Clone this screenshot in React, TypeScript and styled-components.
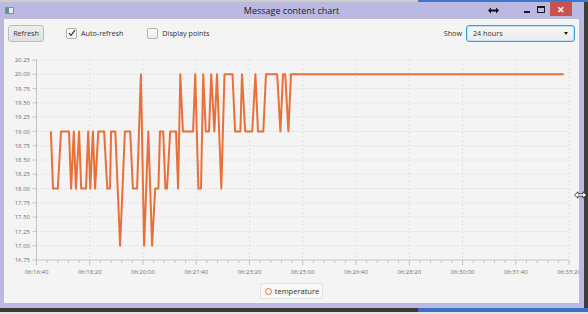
import React from "react";
import styled, { createGlobalStyle } from "styled-components";

const GlobalStyle = createGlobalStyle`
  html, body {
    margin: 0;
    padding: 0;
    background: #e6e6e6;
  }
  body {
    font-family: "Open Sans", "Noto Sans", sans-serif;
  }
`;

const ORANGE = "#e8703a";
const LAVENDER = "#b9b9e4";

// 06:16:40 on the axis, seconds from there
const START = 6 * 3600 + 16 * 60 + 40;
const SPAN = 1000;
const Y_MIN = 16.75;
const Y_MAX = 20.25;

const samples: [number, number][] = [
  [27, 19], [31, 18], [40, 18], [46, 19], [61, 19], [65, 18], [70, 19],
  [74, 18], [80, 19], [84, 18], [93, 18], [97, 19], [101, 18], [106, 19],
  [110, 18], [116, 19], [127, 19], [133, 18], [138, 18], [140, 19],
  [148, 19], [157, 17], [166, 19], [176, 19], [181, 18], [189, 18],
  [196, 20], [202, 17], [210, 19], [217, 17], [223, 18], [229, 18],
  [232, 19], [238, 19], [242, 18], [245, 18], [251, 19], [262, 19],
  [266, 18], [270, 20], [275, 19], [294, 19], [298, 20], [304, 18],
  [309, 18], [313, 20], [318, 19], [324, 19], [328, 20], [334, 19],
  [339, 20], [347, 18], [353, 20], [368, 20], [373, 19], [383, 19],
  [386, 20], [392, 19], [405, 19], [411, 20], [416, 19], [426, 19],
  [431, 20], [452, 20], [458, 19], [463, 20], [467, 20], [473, 19],
  [478, 20], [990, 20],
];

const Screen = styled.div`
  position: relative;
  width: 588px;
  height: 314px;
  overflow: hidden;
  display: flex;
  flex-direction: column;
  background: #e4e4e4;
`;

const BehindStrip = styled.div`
  height: 2px;
  background: linear-gradient(to right, #cdcdcd 0, #cdcdcd 418px, #3b78cf 418px);
`;

const Frame = styled.div`
  box-sizing: border-box;
  width: 588px;
  height: 306px;
  padding: 0 5px 5px 4px;
  background: ${LAVENDER};
  border-right: 4px solid #3c3c3c;
  display: flex;
  flex-direction: column;
`;

const BottomEdge = styled.div`
  height: 4px;
  background: linear-gradient(to right, #3a3a3a 0, #3a3a3a 418px, #3f6fc0 418px);
`;

const TitleBar = styled.div`
  position: relative;
  height: 17px;
  display: grid;
  grid-template-columns: 1fr auto 1fr;
  align-items: center;
`;

const AppIcon = styled.span`
  width: 7px;
  height: 5px;
  margin-left: 1px;
  background: linear-gradient(to right, #4f9c8e 0, #4f9c8e 3px, #e8e8e8 3px);
  border: 1px solid #8a8aa8;
`;

const Title = styled.div`
  font-size: 9px;
  color: #1e1e1e;
  line-height: 17px;
`;

const Controls = styled.div`
  justify-self: end;
  align-self: start;
  display: flex;
  align-items: flex-start;
  margin-right: 7px;
`;

const ControlGlyph = styled.div`
  width: 14px;
  height: 14px;
  display: flex;
  align-items: center;
  justify-content: center;
`;

const MinimizeBar = styled.span`
  width: 6px;
  height: 2px;
  margin-top: 5px;
  background: #1a1a1a;
`;

const MaximizeBox = styled.span`
  box-sizing: border-box;
  width: 8px;
  height: 7px;
  border: 1px solid #1a1a1a;
  border-top-width: 2px;
`;

const CloseButton = styled.div`
  width: 22px;
  height: 14px;
  margin-left: 2px;
  background: #c9524c;
  color: #fff;
  font-size: 9px;
  font-weight: 700;
  display: flex;
  align-items: center;
  justify-content: center;
`;

const Cursor = styled.svg<{ $x: number; $y: number }>`
  position: absolute;
  left: ${(p) => p.$x}px;
  top: ${(p) => p.$y}px;
`;

const Content = styled.div`
  flex: 1;
  background: #f4f4f4;
  display: flex;
  flex-direction: column;
`;

const Toolbar = styled.div`
  height: 28px;
  padding: 0 4px;
  display: flex;
  align-items: center;
  font-size: 7.2px;
  color: #333;
`;

const Button = styled.button`
  box-sizing: border-box;
  width: 36px;
  height: 17px;
  padding: 0;
  border: 1px solid #bcbcbc;
  border-radius: 3px;
  background: linear-gradient(#eeeeee, #e0e0e0);
  font-family: inherit;
  font-size: 7.2px;
  color: #333;
`;

const CheckRow = styled.label<{ $gap: number }>`
  display: flex;
  align-items: center;
  gap: 4px;
  margin-left: ${(p) => p.$gap}px;
`;

const Box = styled.span`
  box-sizing: border-box;
  width: 11px;
  height: 11px;
  border: 1px solid #b4b4b4;
  border-radius: 2px;
  background: linear-gradient(#fbfbfb, #ececec);
  display: flex;
  align-items: center;
  justify-content: center;
`;

const Spacer = styled.div`
  flex: 1;
`;

const ShowLabel = styled.span`
  margin-right: 4px;
`;

const Select = styled.div`
  box-sizing: border-box;
  width: 109px;
  height: 17px;
  padding: 0 6px 0 6px;
  border: 1px solid #3a9fd6;
  box-shadow: inset 0 0 0 1px #bfe2f3;
  border-radius: 3px;
  background: linear-gradient(#f6f6f6, #ececec);
  display: flex;
  align-items: center;
  justify-content: space-between;
`;

const Arrow = styled.span`
  width: 0;
  height: 0;
  border-left: 2.5px solid transparent;
  border-right: 2.5px solid transparent;
  border-top: 3px solid #222;
`;

const ChartSvg = styled.svg`
  display: block;
`;

const LegendRow = styled.div`
  display: flex;
  justify-content: center;
  margin-top: 2px;
`;

const LegendBox = styled.div`
  box-sizing: border-box;
  height: 16px;
  padding: 0 3px 0 4px;
  border: 1px solid #e2e2e2;
  border-radius: 2px;
  background: #f8f8f8;
  display: flex;
  align-items: center;
  gap: 3px;
  font-size: 7.5px;
  color: #333;
`;

const LegendRing = styled.span`
  box-sizing: border-box;
  width: 7px;
  height: 7px;
  border-radius: 50%;
  border: 1.6px solid ${ORANGE};
  background: #fff;
`;

const W = 575;
const H = 234;
const LEFT = 32.5;
const RIGHT = 565;
const TOP = 13;
const BOTTOM = 213;

const sx = (s: number) => LEFT + (s / SPAN) * (RIGHT - LEFT);
const sy = (v: number) => BOTTOM - ((v - Y_MIN) / (Y_MAX - Y_MIN)) * (BOTTOM - TOP);

const pad = (n: number) => String(n).padStart(2, "0");
const clock = (s: number) => {
  const t = START + s;
  return `${pad(Math.floor(t / 3600))}:${pad(Math.floor((t % 3600) / 60))}:${pad(t % 60)}`;
};

const Chart = () => {
  const yTicks = Array.from({ length: 15 }, (_, i) => Y_MIN + i * 0.25);
  const xMajor = Array.from({ length: 11 }, (_, i) => i * 100);
  const xMinor = Array.from({ length: 51 }, (_, i) => i * 20).filter((s) => s % 100 !== 0);
  const points = samples.map(([s, v]) => `${sx(s).toFixed(1)},${sy(v).toFixed(1)}`).join(" ");

  return (
    <ChartSvg width={W} height={H} viewBox={`0 0 ${W} ${H}`}>
      {yTicks.slice(1).map((v) => (
        <line key={`h${v}`} x1={LEFT} x2={RIGHT} y1={sy(v)} y2={sy(v)} stroke="#dcdcdc" strokeWidth={0.8} strokeDasharray="2 2" />
      ))}
      {xMajor.slice(1).map((s) => (
        <line key={`v${s}`} x1={sx(s)} x2={sx(s)} y1={TOP} y2={BOTTOM} stroke="#dcdcdc" strokeWidth={0.8} strokeDasharray="2 2" />
      ))}
      <line x1={LEFT} x2={LEFT} y1={TOP} y2={BOTTOM} stroke="#b8b8b8" strokeWidth={0.8} />
      <line x1={LEFT} x2={RIGHT} y1={BOTTOM} y2={BOTTOM} stroke="#b8b8b8" strokeWidth={0.8} />
      {yTicks.map((v) => (
        <g key={`y${v}`}>
          <line x1={LEFT - 4} x2={LEFT} y1={sy(v)} y2={sy(v)} stroke="#b8b8b8" strokeWidth={0.8} />
          <text x={26} y={sy(v) + 2.1} fontSize={6} fill="#707070" textAnchor="end" fontFamily="Open Sans, Noto Sans, sans-serif">
            {v.toFixed(2)}
          </text>
        </g>
      ))}
      {xMinor.map((s) => (
        <line key={`m${s}`} x1={sx(s)} x2={sx(s)} y1={BOTTOM} y2={BOTTOM + 3} stroke="#b8b8b8" strokeWidth={0.8} />
      ))}
      {xMajor.map((s) => (
        <g key={`x${s}`}>
          <line x1={sx(s)} x2={sx(s)} y1={BOTTOM} y2={BOTTOM + 5} stroke="#b8b8b8" strokeWidth={0.8} />
          <text x={sx(s)} y={227} fontSize={6} fill="#707070" textAnchor="middle" fontFamily="Open Sans, Noto Sans, sans-serif">
            {clock(s)}
          </text>
        </g>
      ))}
      <polyline points={points} fill="none" stroke={ORANGE} strokeWidth={2} strokeLinejoin="round" />
    </ChartSvg>
  );
};

const Check = () => (
  <svg width="8" height="8" viewBox="0 0 8 8">
    <path d="M1 4.2 L3 6.4 L7 1.2" fill="none" stroke="#333" strokeWidth="1.2" />
  </svg>
);

export default function App() {
  return (
    <Screen>
      <GlobalStyle />
      <BehindStrip />
      <Frame>
        <TitleBar>
          <AppIcon />
          <Title>Message content chart</Title>
          <Controls>
            <ControlGlyph>
              <MinimizeBar />
            </ControlGlyph>
            <ControlGlyph>
              <MaximizeBox />
            </ControlGlyph>
            <CloseButton>✕</CloseButton>
          </Controls>
          <Cursor $x={484} $y={5} width="11" height="7" viewBox="0 0 11 7">
            <path d="M0 3.5 L3 0.5 L3 2.5 L8 2.5 L8 0.5 L11 3.5 L8 6.5 L8 4.5 L3 4.5 L3 6.5 Z" fill="#111" />
          </Cursor>
        </TitleBar>
        <Content>
          <Toolbar>
            <Button>Refresh</Button>
            <CheckRow $gap={22}>
              <Box>
                <Check />
              </Box>
              Auto-refresh
            </CheckRow>
            <CheckRow $gap={24}>
              <Box />
              Display points
            </CheckRow>
            <Spacer />
            <ShowLabel>Show</ShowLabel>
            <Select>
              <span>24 hours</span>
              <Arrow />
            </Select>
          </Toolbar>
          <Chart />
          <LegendRow>
            <LegendBox>
              <LegendRing />
              temperature
            </LegendBox>
          </LegendRow>
        </Content>
      </Frame>
      <BottomEdge />
      <Cursor $x={574} $y={191} width="13" height="8" viewBox="0 0 13 8">
        <path d="M0.5 4 L4 0.8 L4 2.8 L9 2.8 L9 0.8 L12.5 4 L9 7.2 L9 5.2 L4 5.2 L4 7.2 Z" fill="#fff" stroke="#222" strokeWidth="0.8" />
      </Cursor>
    </Screen>
  );
}
